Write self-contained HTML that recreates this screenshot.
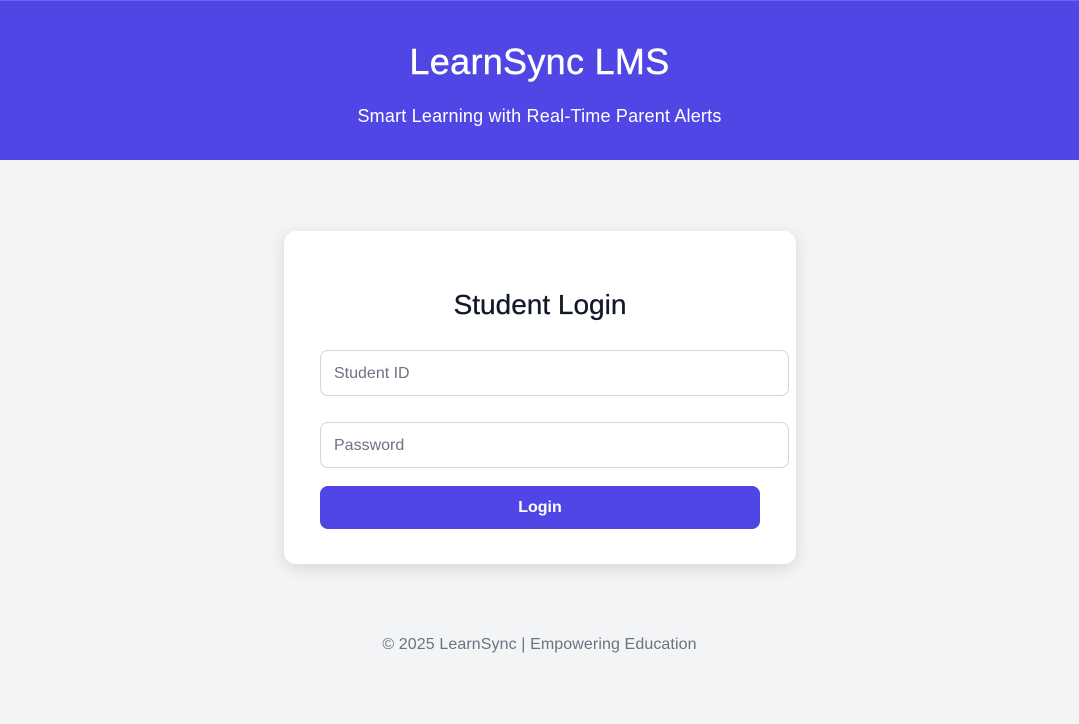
<!DOCTYPE html>
<html><head><meta charset="utf-8"><style>
*{box-sizing:border-box;margin:0;padding:0}
body{width:1079px;height:724px;background:#f3f4f6;font-family:"Liberation Sans",sans-serif;position:relative;overflow:hidden}
.hdr{position:absolute;left:0;top:0;width:1079px;height:160px;background:#4f46e5;border-top:1px solid #6d66ee;color:#fff;text-align:center}
.hdr h1{position:absolute;left:0;right:0;top:40px;font-size:36px;font-weight:normal;line-height:42px;letter-spacing:0.3px;-webkit-text-stroke:0.4px #fff}
.hdr p{position:absolute;left:0;right:0;top:104px;font-size:18px;line-height:22px;letter-spacing:0.2px}
.card{position:absolute;left:284px;top:231px;width:512px;height:333px;background:#fff;border-radius:12px;box-shadow:0 4px 16px rgba(0,0,0,.12)}
.t{position:absolute;left:284px;width:512px;top:288px;text-align:center;font-size:28px;color:#111827;line-height:34px;-webkit-text-stroke:0.3px #111827}
.in{position:absolute;left:320px;width:469px;height:46px;border:1px solid #d1d5db;border-radius:8px;background:#fff;font-size:16px;color:#6b7280;padding-left:13px;line-height:46px}
.btn{position:absolute;left:320px;top:486px;width:440px;height:43px;background:#4f46e5;border-radius:8px;color:#fff;text-align:center;font-size:16px;line-height:43px;font-weight:bold}
.ft{position:absolute;left:0;right:0;top:635px;text-align:center;color:#6b7280;font-size:16px;line-height:20px;letter-spacing:0.1px}
</style></head><body>
<div class="hdr"><h1>LearnSync LMS</h1><p>Smart Learning with Real-Time Parent Alerts</p></div>
<div class="card"></div>
<div class="t">Student Login</div>
<div class="in" style="top:350px">Student ID</div>
<div class="in" style="top:422px">Password</div>
<div class="btn">Login</div>
<div class="ft">© 2025 LearnSync | Empowering Education</div>
</body></html>
